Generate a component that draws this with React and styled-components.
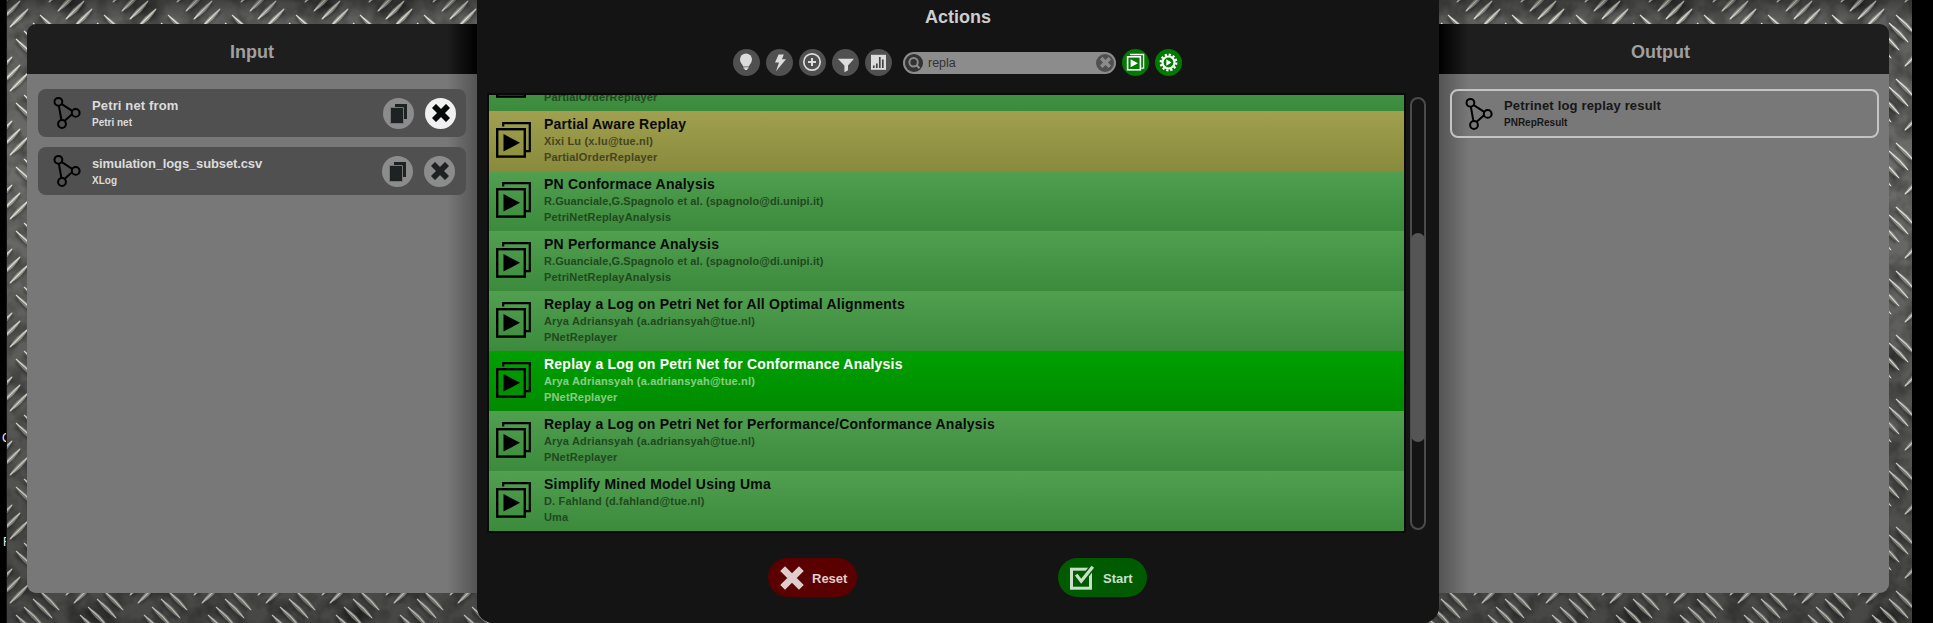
import React from "react";
import styled, { createGlobalStyle } from "styled-components";

const Global = createGlobalStyle`
  * { box-sizing: border-box; }
  html, body { margin: 0; padding: 0; background: #000; overflow: hidden; }
  body { font-family: "Liberation Sans", Arial, sans-serif; }
`;

const Screen = styled.div`
  display: flex;
  width: 1933px;
  height: 623px;
  overflow: hidden;
  background: #000;
`;

const Gutter = styled.div`
  flex: none;
  width: 7px;
  height: 623px;
  padding: 430px 0 0 2px;
  overflow: hidden;
  border-right: 1px solid #141414;
  color: #e8f0f8;
  font-size: 12px;
  line-height: 16px;
`;

const GutterLetter = styled.div`
  height: 16px;
  margin-bottom: 88px;
  margin-left: ${(p) => p.$indent || 0}px;
`;

const Stage = styled.div`
  position: relative;
  display: flex;
  flex: none;
  align-items: flex-start;
  width: 1905px;
  height: 623px;
  padding-left: 20px;
  overflow: hidden;
`;

const PlateSvg = styled.svg`
  position: absolute;
  inset: 0;
`;

const SidePanel = styled.section`
  position: relative;
  flex: none;
  width: 450px;
  height: 569px;
  margin-top: 24px;
  overflow: hidden;
  background: #787878;
  border-radius: ${(p) => (p.$side === "left" ? "9px 0 0 9px" : "0 9px 9px 0")};
`;

const PanelHeader = styled.header`
  height: 50px;
  padding-right: ${(p) => (p.$side === "left" ? 0 : 7)}px;
  background:
    linear-gradient(${(p) => (p.$side === "left" ? "to left" : "to right")}, #000 0, rgba(0, 0, 0, 0) 30px),
    #1e1e1e;
  color: #a0a0a0;
  font-size: 18px;
  font-weight: 700;
  line-height: 56px;
  text-align: center;
`;

const PanelBody = styled.div`
  display: flex;
  flex-direction: column;
  gap: 10px;
  height: 519px;
  padding: 15px ${(p) => (p.$side === "left" ? 11 : 10)}px 0 11px;
  background: linear-gradient(
    ${(p) => (p.$side === "left" ? "to left" : "to right")},
    rgba(0, 0, 0, 0.3) 0,
    rgba(0, 0, 0, 0) 30px
  );
`;

const Resource = styled.article`
  display: flex;
  align-items: center;
  height: ${(p) => (p.$outlined ? 49 : 48)}px;
  padding-left: ${(p) => (p.$outlined ? 12 : 14)}px;
  border: ${(p) => (p.$outlined ? "2px solid #c4c4c4" : "none")};
  border-radius: 8px;
  background: ${(p) => (p.$outlined ? "transparent" : "#505050")};
  color: ${(p) => (p.$outlined ? "#161616" : "#dcdcdc")};
`;

const ResourceText = styled.div`
  flex: 1;
  padding: 1px 0 0 10px;
  font-weight: 700;
`;

const ResourceName = styled.div`
  font-size: 13px;
  line-height: 16px;
  letter-spacing: ${(p) => p.$tracking || 0}px;
`;

const ResourceType = styled.div`
  margin-top: 2px;
  font-size: 10px;
  line-height: 14px;
`;

const RoundButton = styled.button`
  display: flex;
  flex: none;
  align-items: center;
  justify-content: center;
  width: ${(p) => p.$size}px;
  height: ${(p) => p.$size}px;
  padding: 0;
  border: 0;
  border-radius: 50%;
  background: ${(p) => p.$color};
`;

const ResourceButtons = styled.div`
  display: flex;
  gap: 11px;
  padding-right: ${(p) => p.$inset}px;
`;

const Dialog = styled.main`
  position: relative;
  display: flex;
  flex: none;
  flex-direction: column;
  width: 962px;
  height: 637px;
  margin-top: -14px;
  padding-top: 14px;
  background: #141414;
  border-radius: 16px;
`;

const DialogTitle = styled.h1`
  margin: 0;
  height: 49px;
  color: #cdcdcd;
  font-size: 18px;
  font-weight: 700;
  line-height: 34px;
  text-align: center;
`;

const Toolbar = styled.div`
  display: flex;
  align-items: center;
  gap: 6px;
  height: 27px;
  margin-left: 256px;
`;

const SearchBox = styled.div`
  display: flex;
  align-items: center;
  width: 213px;
  height: 22px;
  margin: 0 0 0 5px;
  padding: 0 2px;
  border-radius: 11px;
  background: #8c8c8c;
`;

const SearchText = styled.span`
  flex: 1;
  padding: 1px 0 0 5px;
  color: #333;
  font-size: 12.5px;
`;

const ListArea = styled.div`
  display: flex;
  margin: 17px 0 0 10px;
`;

const ActionList = styled.div`
  display: flex;
  flex-direction: column;
  justify-content: flex-end;
  width: 919px;
  height: 440px;
  overflow: hidden;
  border: 2px solid #0a0a0a;
`;

const rowColors = {
  green: "linear-gradient(#50a050, #3c8a3c)",
  olive: "linear-gradient(#a0a050, #8a8a3c)",
  selected: "linear-gradient(#00a000, #008a00)",
};

const ActionRow = styled.div`
  display: flex;
  flex: none;
  height: 60px;
  padding: 11px 0 0 7px;
  background: ${(p) => rowColors[p.$tone]};
`;

const ActionText = styled.div`
  margin: -6px 0 0 12px;
  font-size: 11px;
  font-weight: 700;
  letter-spacing: 0.17px;
  line-height: 16px;
  color: ${(p) =>
    p.$tone === "selected" ? "rgba(255,255,255,.55)" : p.$tone === "olive" ? "#45441f" : "#22481f"};
`;

const ActionName = styled.div`
  height: 17px;
  font-size: 14px;
  letter-spacing: 0.23px;
  color: ${(p) => (p.$tone === "selected" ? "#fff" : "#0a0a0a")};
`;

const ActionAuthor = styled.div`
  letter-spacing: ${(p) => (p.$tight ? 0.08 : 0.17)}px;
`;

const ScrollTrack = styled.div`
  width: 16px;
  height: 433px;
  margin: 4px 0 0 4px;
  padding-top: 134px;
  border: 2px solid #4b4b4b;
  border-radius: 8px;
`;

const ScrollThumb = styled.div`
  width: 14px;
  height: 209px;
  margin-left: -1px;
  border-radius: 7px;
  background: #555;
`;

const Footer = styled.footer`
  display: flex;
  gap: 201px;
  margin: 25px 0 0 291px;
`;

const PillButton = styled.button`
  display: flex;
  align-items: center;
  width: 89px;
  height: 39px;
  padding: 0 0 0 12px;
  border: 0;
  border-radius: 20px;
  background: ${(p) => p.$color};
  color: ${(p) => p.$ink};
  font-family: inherit;
  font-size: 13px;
  font-weight: 700;
`;

const PillLabel = styled.span`
  padding: 1px 0 0 8px;
`;

function Plate() {
  const slash = [[9, 28], [1, 20], [-7, 12], [-16, 3]];
  const back = [[40, 15], [33, 23], [24, 31], [16, 39]];
  const treads = [];
  [-64, 0, 64].forEach((dx) =>
    [-64, 0, 64].forEach((dy) => {
      slash.forEach(([x, y]) => treads.push({ k: "s", x: x + dx, y: y + dy }));
      back.forEach(([x, y]) => treads.push({ k: "b", x: x + dx, y: y + dy }));
    })
  );
  return (
    <PlateSvg width="1905" height="623" aria-hidden="true">
      <defs>
        <linearGradient id="ground" x1="0" y1="0" x2="0" y2="1">
          <stop offset="0" stopColor="#5c5c5b" />
          <stop offset="0.28" stopColor="#6c6c6b" />
          <stop offset="1" stopColor="#565655" />
        </linearGradient>
        <linearGradient id="dim" x1="0" y1="0" x2="0" y2="1">
          <stop offset="0" stopColor="#000" stopOpacity="0.3" />
          <stop offset="0.03" stopColor="#000" stopOpacity="0" />
          <stop offset="0.3" stopColor="#000" stopOpacity="0" />
          <stop offset="1" stopColor="#000" stopOpacity="0.18" />
        </linearGradient>
        <radialGradient id="stain">
          <stop offset="0" stopColor="#000" stopOpacity="0.45" />
          <stop offset="1" stopColor="#000" stopOpacity="0" />
        </radialGradient>
        <filter id="mottle" x="0" y="0" width="1" height="1">
          <feTurbulence type="fractalNoise" baseFrequency="0.05" numOctaves="3" seed="4" />
          <feColorMatrix values="0 0 0 0 0  0 0 0 0 0  0 0 0 0 0  1.3 0 0 0 -0.5" />
        </filter>
        <filter id="soft"><feGaussianBlur stdDeviation="1.1" /></filter>
        <pattern id="treads" width="64" height="64" patternUnits="userSpaceOnUse" patternTransform="translate(-7 0)">
          <g filter="url(#soft)" stroke="#202020" strokeOpacity="0.5" strokeWidth="2.4" strokeLinecap="round">
            {treads.map((t, i) =>
              t.k === "s" ? (
                <path key={i} d={`M${t.x + 4} ${t.y - 1}l15 -15`} />
              ) : (
                <path key={i} d={`M${t.x} ${t.y + 4}l15 15`} />
              )
            )}
          </g>
          {treads.map((t, i) =>
            t.k === "s" ? (
              <g key={i} transform={`translate(${t.x} ${t.y})`}>
                <path d="M0 0Q6 -12 20 -20Q14 -7 0 0Z" fill="#92928d" />
                <path d="M1 -1Q9 -9 19 -19" fill="none" stroke="#e6e6dc" strokeWidth="1.1" />
              </g>
            ) : (
              <g key={i} transform={`translate(${t.x} ${t.y})`}>
                <path d="M0 0Q14 7 20 20Q6 12 0 0Z" fill="#858581" />
                <path d="M0 0Q11 9 19 19" fill="none" stroke="#e6e6dc" strokeWidth="1.1" />
              </g>
            )
          )}
        </pattern>
        <pattern id="stains" width="256" height="256" patternUnits="userSpaceOnUse">
          <ellipse cx="90" cy="106" rx="24" ry="18" fill="url(#stain)" />
          <ellipse cx="136" cy="10" rx="24" ry="20" fill="url(#stain)" />
          <ellipse cx="62" cy="4" rx="20" ry="12" fill="url(#stain)" />
        </pattern>
      </defs>
      <rect width="1905" height="623" fill="url(#ground)" />
      <rect width="1905" height="623" filter="url(#mottle)" opacity="0.55" />
      <rect width="1905" height="623" fill="url(#stains)" />
      <rect width="1905" height="623" fill="url(#treads)" />
      <rect width="1905" height="623" fill="url(#dim)" />
    </PlateSvg>
  );
}

const PetriIcon = () => (
  <svg width="30" height="36" viewBox="0 0 30 36" fill="none" stroke="#000" strokeWidth="2">
    <path d="M6.9 11l2.6 14.5M9.8 9.2l10.4 6.6M12.7 25.7l7.6-6.6" />
    <circle cx="6.4" cy="6.8" r="3.9" />
    <circle cx="23.7" cy="17.9" r="3.9" />
    <circle cx="10" cy="29" r="3.9" />
  </svg>
);

const CopyIcon = () => (
  <svg width="19" height="21" viewBox="0 0 19 21">
    <path d="M6 1h12v15H6z" fill="#1e2222" />
    <path d="M1.5 4.5h13v16H1.5z" fill="#1e2222" stroke="#777" strokeWidth="1" />
  </svg>
);

const CrossIcon = ({ size, color, width = 6.4 }) => (
  <svg width={size} height={size} viewBox="0 0 22 22">
    <path d="M2.4 2.4L19.6 19.6M19.6 2.4L2.4 19.6" stroke={color} strokeWidth={width} />
  </svg>
);

const PlayStackIcon = () => (
  <svg width="36" height="36" viewBox="0 0 36 36">
    <path d="M7.2 4.5V1.2h26.6v28h-4" fill="none" stroke="#000" strokeWidth="2.2" />
    <rect x="1.2" y="7.2" width="27.6" height="27.4" fill="none" stroke="#000" strokeWidth="2.4" />
    <path d="M7.5 12v17.5l16.5-8.7z" fill="#000" />
  </svg>
);

const toolbarIcons = {
  bulb: (
    <g fill="#dcdcdc">
      <circle cx="13" cy="10.4" r="6" />
      <path d="M8.2 13.5h9.6l-2 4h-5.6zM10.5 18.3h5v1.3h-5zM11.3 19.6h3.4l-.7 1.4h-2z" />
    </g>
  ),
  bolt: <path d="M12.6 5.5h5.2L16 10.2h4L10 22.2l3-8.6H9z" fill="#dcdcdc" />,
  plus: (
    <g fill="none" stroke="#dcdcdc">
      <circle cx="13" cy="13" r="8.2" strokeWidth="1.7" />
      <path d="M13 9v8M9 13h8" strokeWidth="2" />
    </g>
  ),
  funnel: <path d="M5.8 9.8h16.2l-6 6.6v4.8l-3.6 2v-6.8z" fill="#dcdcdc" />,
  chart: (
    <g>
      <rect x="6" y="5.8" width="15" height="15" fill="#dcdcdc" />
      <path d="M8.8 19v-2.4M11.8 19v-4.6M14.8 19V8M17.8 19v-8.5" stroke="#444" strokeWidth="1.7" />
    </g>
  ),
  stack: (
    <g fill="none" stroke="#fff" strokeWidth="1.3">
      <path d="M8.6 6V5.5h13v13.6h-2.4" />
      <rect x="5.6" y="7.8" width="12.8" height="13" strokeWidth="1.6" />
      <path d="M8.6 10.3v8l7.4-4z" fill="#fff" stroke="none" />
    </g>
  ),
  gear: (
    <g fill="none" stroke="#fff">
      <circle cx="13.5" cy="13.5" r="7.8" strokeWidth="2.2" strokeDasharray="2.2 1.884" />
      <circle cx="13.5" cy="13.5" r="6" strokeWidth="2.2" />
      <path d="M11.3 10.2v6.6l5.2-3.3z" fill="#fff" stroke="none" />
    </g>
  ),
};

const ToolButton = ({ icon, color = "#505050" }) => (
  <RoundButton $size={27} $color={color} aria-label={icon}>
    <svg width="27" height="27" viewBox="0 0 27 27">{toolbarIcons[icon]}</svg>
  </RoundButton>
);

const CheckIcon = () => (
  <svg width="25" height="26" viewBox="0 0 25 26" fill="none" stroke="#c8dfc8">
    <rect x="1.5" y="4.2" width="19" height="19" strokeWidth="3" />
    <path d="M6.6 9.3l4.6 7L22.8 1.6" stroke="#005a00" strokeWidth="6" />
    <path d="M6.2 9.6l5 6.6L22.8 1.8" strokeWidth="3.2" />
  </svg>
);

const inputs = [
  { name: "Petri net from", type: "Petri net", tracking: 0.14, inset: 10, hot: true },
  { name: "simulation_logs_subset.csv", type: "XLog", tracking: -0.13, inset: 11 },
];

const actions = [
  { name: "Partial Aware Replay", author: "Xixi Lu (x.lu@tue.nl)", pack: "PartialOrderReplayer", tone: "green" },
  { name: "Partial Aware Replay", author: "Xixi Lu (x.lu@tue.nl)", pack: "PartialOrderReplayer", tone: "olive" },
  { name: "PN Conformace Analysis", author: "R.Guanciale,G.Spagnolo et al. (spagnolo@di.unipi.it)", pack: "PetriNetReplayAnalysis", tone: "green" },
  { name: "PN Performance Analysis", author: "R.Guanciale,G.Spagnolo et al. (spagnolo@di.unipi.it)", pack: "PetriNetReplayAnalysis", tone: "green" },
  { name: "Replay a Log on Petri Net for All Optimal Alignments", author: "Arya Adriansyah (a.adriansyah@tue.nl)", pack: "PNetReplayer", tone: "green" },
  { name: "Replay a Log on Petri Net for Conformance Analysis", author: "Arya Adriansyah (a.adriansyah@tue.nl)", pack: "PNetReplayer", tone: "selected" },
  { name: "Replay a Log on Petri Net for Performance/Conformance Analysis", author: "Arya Adriansyah (a.adriansyah@tue.nl)", pack: "PNetReplayer", tone: "green" },
  { name: "Simplify Mined Model Using Uma", author: "D. Fahland (d.fahland@tue.nl)", pack: "Uma", tone: "green" },
];

export default function App() {
  return (
    <Screen>
      <Global />
      <Gutter>
        <GutterLetter>C</GutterLetter>
        <GutterLetter $indent={1}>F</GutterLetter>
      </Gutter>
      <Stage>
        <Plate />
        <SidePanel $side="left">
          <PanelHeader $side="left">Input</PanelHeader>
          <PanelBody $side="left">
            {inputs.map((r) => (
              <Resource key={r.name}>
                <PetriIcon />
                <ResourceText>
                  <ResourceName $tracking={r.tracking}>{r.name}</ResourceName>
                  <ResourceType>{r.type}</ResourceType>
                </ResourceText>
                <ResourceButtons $inset={r.inset}>
                  <RoundButton $size={31} $color="#8c8c8c" aria-label="copy"><CopyIcon /></RoundButton>
                  <RoundButton $size={31} $color={r.hot ? "#f0f0f0" : "#8c8c8c"} aria-label="remove">
                    <CrossIcon size={18} color={r.hot ? "#050808" : "#1e2222"} width={7} />
                  </RoundButton>
                </ResourceButtons>
              </Resource>
            ))}
          </PanelBody>
        </SidePanel>

        <Dialog>
          <DialogTitle>Actions</DialogTitle>
          <Toolbar>
            <ToolButton icon="bulb" />
            <ToolButton icon="bolt" />
            <ToolButton icon="plus" />
            <ToolButton icon="funnel" />
            <ToolButton icon="chart" />
            <SearchBox>
              <RoundButton as="span" $size={18} $color="#323232">
                <svg width="18" height="18" viewBox="0 0 18 18" fill="none" stroke="#8c8c8c">
                  <circle cx="8.6" cy="8.2" r="4.2" strokeWidth="2" />
                  <path d="M11.6 11.2l3 3" strokeWidth="2.2" />
                </svg>
              </RoundButton>
              <SearchText>repla</SearchText>
              <RoundButton $size={18} $color="#505050" aria-label="clear">
                <CrossIcon size={11} color="#8c8c8c" width={7} />
              </RoundButton>
            </SearchBox>
            <ToolButton icon="stack" color="#007a00" />
            <ToolButton icon="gear" color="#007a00" />
          </Toolbar>
          <ListArea>
            <ActionList>
              {actions.map((a, i) => (
                <ActionRow key={i} $tone={a.tone}>
                  <PlayStackIcon />
                  <ActionText $tone={a.tone}>
                    <ActionName $tone={a.tone}>{a.name}</ActionName>
                    <ActionAuthor $tight={a.author.startsWith("R.")}>{a.author}</ActionAuthor>
                    <div>{a.pack}</div>
                  </ActionText>
                </ActionRow>
              ))}
            </ActionList>
            <ScrollTrack>
              <ScrollThumb />
            </ScrollTrack>
          </ListArea>
          <Footer>
            <PillButton $color="#5a0000" $ink="#e0cccc">
              <CrossIcon size={24} color="#e0cccc" width={6.2} />
              <PillLabel>Reset</PillLabel>
            </PillButton>
            <PillButton $color="#005a00" $ink="#cce0cc">
              <CheckIcon />
              <PillLabel>Start</PillLabel>
            </PillButton>
          </Footer>
        </Dialog>

        <SidePanel $side="right">
          <PanelHeader $side="right">Output</PanelHeader>
          <PanelBody $side="right">
            <Resource $outlined>
              <PetriIcon />
              <ResourceText>
                <ResourceName $tracking={0.18}>Petrinet log replay result</ResourceName>
                <ResourceType>PNRepResult</ResourceType>
              </ResourceText>
            </Resource>
          </PanelBody>
        </SidePanel>
      </Stage>
    </Screen>
  );
}
